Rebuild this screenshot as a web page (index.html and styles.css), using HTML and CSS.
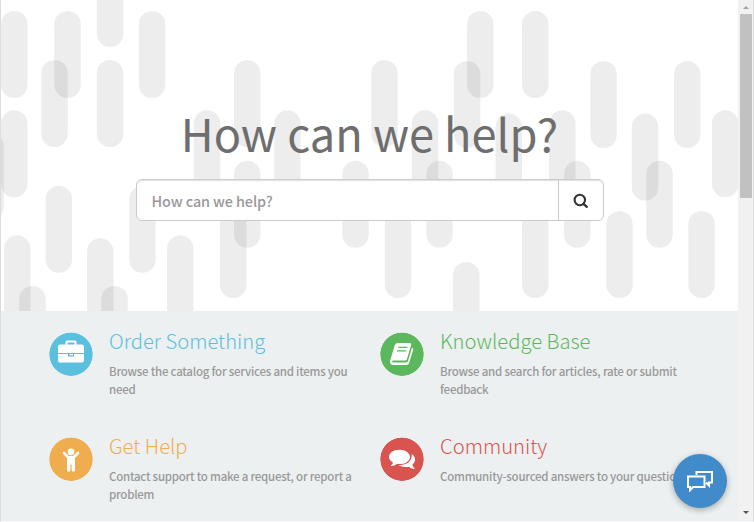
FILE: index.html
```html
<!DOCTYPE html>
<html lang="en">
<head>
<meta charset="utf-8">
<title>How can we help?</title>
<link rel="stylesheet" href="styles.css">
</head>
<body>
<div class="window">
  <main class="page">
    <section class="hero">
      <svg class="pattern" width="737" height="311" aria-hidden="true"><defs><rect id="p" width="26.5" height="87" rx="13.2"/></defs>
        <g fill="#000" fill-opacity=".07">
          <use href="#p" x="0" y="11"/><use href="#p" x="53.3" y="11"/><use href="#p" x="137.8" y="11"/><use href="#p" x="466" y="11"/><use href="#p" x="521" y="11"/>
          <use href="#p" x="95.8" y="-40"/>
          <use href="#p" x="40.3" y="60"/><use href="#p" x="95.8" y="60"/><use href="#p" x="233" y="60"/><use href="#p" x="370.2" y="60"/><use href="#p" x="452.8" y="61"/><use href="#p" x="589.3" y="61"/><use href="#p" x="673" y="61"/>
          <use href="#p" x="0" y="110.3"/><use href="#p" x="192.8" y="110.3"/><use href="#p" x="273.2" y="110.3"/><use href="#p" x="410.8" y="110.3"/><use href="#p" x="548" y="110.3"/><use href="#p" x="711" y="110.3"/>
          <use href="#p" x="494.5" y="113.6"/><use href="#p" x="630.8" y="113.6"/>
          <use href="#p" x="-23.7" y="132.5"/>
          <use href="#p" x="233" y="160.8"/><use href="#p" x="341.3" y="160.8"/><use href="#p" x="425.3" y="160.8"/><use href="#p" x="563" y="160.8"/><use href="#p" x="645.3" y="160.8"/>
          <use href="#p" x="44.6" y="185.8"/><use href="#p" x="128.2" y="185.8"/>
          <use href="#p" x="219" y="211"/><use href="#p" x="383.8" y="211"/><use href="#p" x="521" y="211"/><use href="#p" x="605.2" y="211"/><use href="#p" x="687.3" y="211"/>
          <use href="#p" x="3" y="235.3"/><use href="#p" x="166" y="235.3"/><use href="#p" x="86" y="238.3"/><use href="#p" x="452" y="262"/>
          <use href="#p" x="18.2" y="286"/><use href="#p" x="100.3" y="286"/>
        </g>
      </svg>
      <h1 class="title">How can we help?</h1>
      <form class="search">
        <input class="search-input" type="text" placeholder="How can we help?" aria-label="Search">
        <button class="search-button" type="button" aria-label="Search">
          <svg width="16" height="16" viewBox="0 0 16 16" fill="none" stroke="#333" stroke-width="2.1"><circle cx="6.8" cy="8" r="5.2"/><path d="M10.500 11.800l3.300 3" stroke-width="2.300" stroke-linecap="round"/></svg>
        </button>
      </form>
    </section>
    <section class="cards">
      <article class="card order">
        <span class="icon"><svg width="44" height="44" viewBox="0 1 44 44"><path fill="#fff" fill-rule="evenodd" d="M16.500 13.500V11q0-1.500 1.500-1.500h8Q27.500 9.500 27.500 11v2.500h5.500q2 0 2 2V22H9v-6.500q0-2 2-2zm2 0h7v-2H18.500zM9 23h10v2.500h6V23H35v6.500q0 2-2 2H11q-2 0-2-2zm11.500 0H24v1.300h-3.500z"/></svg></span>
        <div class="copy"><h2>Order Something</h2><p>Browse the catalog for services and items you need</p></div>
      </article>
      <article class="card knowledge">
        <span class="icon"><svg width="44" height="44" viewBox="0 -.5 44 44"><path fill="#fff" d="M17.500 10.500H30q1.700 0 1.200 1.700l-4.300 14.500q-.4 1.300-1.900 1.300H13.500q-1.500 0-1.500 1 0 1.100 1.700 1.100H26q1.500 0 2-1.600l4-13.500q1.600.5 1.200 2.300l-4 13q-.6 2.200-2.900 2.200H13.500q-3.900 0-3.500-3.900L14.700 13q.8-2.500 2.800-2.500z"/><path d="M18.300 14.800h9.200M17 18.300h9.200" stroke="#5cb85c" stroke-width="1.300"/></svg></span>
        <div class="copy"><h2>Knowledge Base</h2><p>Browse and search for articles, rate or submit feedback</p></div>
      </article>
      <article class="card help">
        <span class="icon"><svg width="44" height="44" viewBox="0 -.5 44 44"><circle cx="22" cy="14.300" r="3.400" fill="#fff"/><path d="M15 15.500l4.300 4.300h5.400l4.300-4.300" fill="none" stroke="#fff" stroke-width="2.600" stroke-linecap="round" stroke-linejoin="round"/><path fill="#fff" d="M18 18.500h8v14q0 1.700-1.700 1.700t-1.700-1.700V27h-1.200v5.500q0 1.700-1.700 1.700T18 32.500z"/></svg></span>
        <div class="copy"><h2>Get Help</h2><p>Contact support to make a request, or report a problem</p></div>
      </article>
      <article class="card community">
        <span class="icon"><svg width="44" height="44" viewBox="0 -.5 44 44" fill="#fff"><path d="M31.800 16.500C36.500 20 35.800 24.700 32.300 27q.5 2.600 2.400 3.700.2.700-.8.700-2.800-.3-5.200-2.200-6 1.200-10.200-1.600 13.500-.1 13.300-11.100z"/><path d="M19.500 12.200c6 0 10.500 3.200 10.500 7.200s-4.500 7.200-10.500 7.200q-1.300 0-2.600-.2-2.600 2-5.200 2.200-1 0-.8-.7 1.800-1.300 2.100-3Q9 22.700 9 19.400c0-4 4.500-7.200 10.500-7.200z"/></svg></span>
        <div class="copy"><h2>Community</h2><p>Community-sourced answers to your questions</p></div>
      </article>
    </section>
  </main>
  <div class="scrollbar" aria-hidden="true"><i class="arrow up"></i><i class="thumb"></i><i class="arrow down"></i></div>
  <button class="chat" type="button" aria-label="Chat">
    <svg width="28" height="22" viewBox="0 0 28 22" fill="none" stroke="#fff" stroke-width="2"><path d="M10.500 5V2H26v10.500h-3v3l-3-3"/><path fill="#428bca" d="M2 6.500h16.500V17H7l-3 3.300V17H2z"/></svg>
  </button>
</div>
</body>
</html>
```
FILE: styles.css
```css
* { box-sizing: border-box; }
body { margin: 0; overflow: hidden; background: #fff; font-family: "Noto Sans CJK SC", "Noto Sans", sans-serif; }
h1, h2, p { margin: 0; }
.window { position: relative; display: flex; width: 754px; height: 522px; border-left: 1px solid #ddd; border-right: 1px solid #ddd; border-bottom: 1px solid #f7f9fa; }
.page { flex: 1; min-width: 0; background: #ecf0f1; overflow: hidden; }
.hero { position: relative; height: 311px; padding-top: 97px; background: #fff; overflow: hidden; }
.pattern { position: absolute; top: 0; left: 0; }
.title { position: relative; height: 72px; line-height: 72px; font-size: 45.200px; font-weight: 400; color: #6e6e6e; text-align: center; white-space: nowrap; }
.search { position: relative; display: flex; width: 468px; height: 42px; margin: 10px 0 0 135px; border: 1px solid #ccc; border-radius: 6px; background: #fff; overflow: hidden; box-shadow: inset 0 1px 1px #e2e2e2; }
.search-input { flex: 1; min-width: 0; padding: 0 14.500px; border: 0; background: transparent; font: 500 14.400px "Noto Sans CJK SC", sans-serif; letter-spacing: -.1px; color: #555; }
.search-input::placeholder { color: #999; opacity: 1; }
.search-button { display: flex; align-items: center; justify-content: center; width: 45px; padding: 0; border: 0; border-left: 1px solid #ccc; background: transparent; }
.cards { display: grid; grid-template-columns: 331px 331px; grid-auto-rows: 105px; padding: 17px 0 0 48px; }
.card { display: flex; gap: 16px; }
.icon { flex: none; width: 44px; height: 44px; margin-top: 4px; border-radius: 50%; background: radial-gradient(circle at 22px 22.300px, var(--accent) 21.300px, transparent 22px); }
.icon svg { display: block; }
.copy { width: 252px; }
.copy h2 { height: 34px; line-height: 25px; font-size: 20.200px; font-weight: 300; color: var(--accent); white-space: nowrap; }
.copy p { font-size: 11.500px; line-height: 18px; font-weight: 500; letter-spacing: -.24px; color: #999; }
.order { --accent: #5bc0de; }
.knowledge { --accent: #5cb85c; }
.help { --accent: #f0ad4e; }
.community { --accent: #d9534f; }
.scrollbar { display: flex; flex-direction: column; align-items: center; flex: none; width: 15px; background: #f1f1f1; }
.thumb { width: 12px; height: 184px; background: #c1c1c1; }
.arrow { width: 6px; border: 3px solid transparent; border-top: 0; border-bottom: 3px solid #a3a3a3; margin: 6px 0 5px; height: 3px; }
.arrow.down { border-top: 3px solid #505050; border-bottom: 0; margin: auto 0 7px; }
.chat { position: absolute; right: 26.500px; bottom: 13px; display: flex; align-items: center; justify-content: center; width: 54px; height: 54px; padding: 0; border: 0; border-radius: 50%; background: #428bca; box-shadow: 0 2px 6px rgba(0, 0, 0, .3); }
```
